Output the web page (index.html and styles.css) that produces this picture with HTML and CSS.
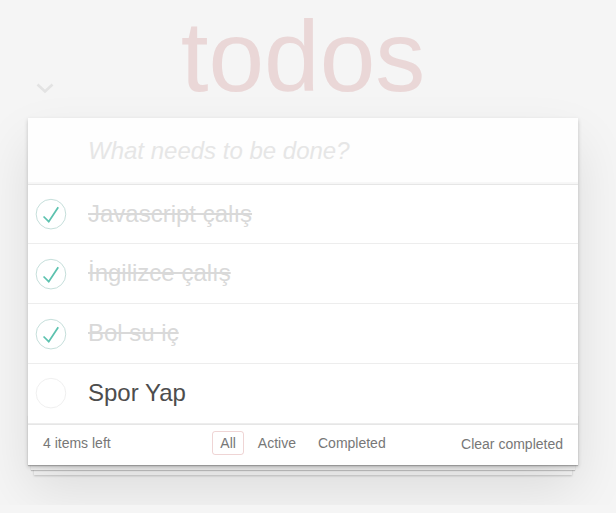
FILE: index.html
```html
<!DOCTYPE html>
<html lang="tr">
<head>
<meta charset="utf-8">
<title>todos</title>
<link rel="stylesheet" href="styles.css">
</head>
<body>
<section class="page">
  <h1 class="title">todos</h1>
  <div class="app">
    <svg class="toggle-all" width="18" height="11" viewBox="0 0 18 11"><polyline points="1.5,1.5 9,8.5 16.5,1.5" fill="none" stroke="#e3e3e3" stroke-width="2.6"/></svg>
    <div class="new-row">
      <input class="new-todo" placeholder="What needs to be done?">
    </div>
    <ul class="list">
      <li class="item completed">
        <svg class="toggle" width="40" height="40" viewBox="-10 -18 100 135"><circle cx="50" cy="50" r="50" fill="none" stroke="#bddad5" stroke-width="3"/><path fill="#5dc2af" d="M72 25L42 71 27 56l-4 4 20 20 34-52z"/></svg>
        <span class="label">Javascript çalış</span>
      </li>
      <li class="item completed">
        <svg class="toggle" width="40" height="40" viewBox="-10 -18 100 135"><circle cx="50" cy="50" r="50" fill="none" stroke="#bddad5" stroke-width="3"/><path fill="#5dc2af" d="M72 25L42 71 27 56l-4 4 20 20 34-52z"/></svg>
        <span class="label">İngilizce çalış</span>
      </li>
      <li class="item completed">
        <svg class="toggle" width="40" height="40" viewBox="-10 -18 100 135"><circle cx="50" cy="50" r="50" fill="none" stroke="#bddad5" stroke-width="3"/><path fill="#5dc2af" d="M72 25L42 71 27 56l-4 4 20 20 34-52z"/></svg>
        <span class="label">Bol su iç</span>
      </li>
      <li class="item">
        <svg class="toggle" width="40" height="40" viewBox="-10 -18 100 135"><circle cx="50" cy="50" r="50" fill="none" stroke="#ededed" stroke-width="3"/></svg>
        <span class="label">Spor Yap</span>
      </li>
    </ul>
    <footer class="footer">
      <span class="count">4 items left</span>
      <ul class="filters">
        <li><a class="filter selected" href="#/">All</a></li>
        <li><a class="filter" href="#/active">Active</a></li>
        <li><a class="filter" href="#/completed">Completed</a></li>
      </ul>
      <span class="clear">Clear completed</span>
    </footer>
  </div>
</section>
</body>
</html>
```

FILE: styles.css
```css
html, body {
  margin: 0;
  padding: 0;
}

body {
  background: #f5f5f5;
  color: #4d4d4d;
  font: 14px "Liberation Sans", Arial, sans-serif;
  line-height: 1.4em;
}

.page {
  width: 550px;
  margin: 0 0 40px 28px;
  padding-top: 6px;
}

.title {
  margin: 0 0 12px 0;
  height: 100px;
  font-size: 100px;
  line-height: 100px;
  font-weight: 100;
  text-align: center;
  color: rgba(175, 47, 47, 0.15);
}

.app {
  position: relative;
  background: #fff;
  box-shadow: 0 2px 4px 0 rgba(0, 0, 0, 0.2), 0 25px 50px 0 rgba(0, 0, 0, 0.1);
}

.toggle-all {
  position: absolute;
  left: 8px;
  top: -35px;
}

.new-row {
  display: flex;
}

.new-todo {
  flex: 1;
  margin: 0;
  padding: 16px 16px 16px 60px;
  border: none;
  outline: none;
  background: rgba(0, 0, 0, 0.003);
  box-shadow: inset 0 -2px 1px rgba(0, 0, 0, 0.03);
  font-family: inherit;
  font-size: 24px;
  line-height: 1.4em;
  height: 65.6px;
  box-sizing: border-box;
  color: #4d4d4d;
}

.new-todo::placeholder {
  font-style: italic;
  color: #e6e6e6;
}

.list {
  margin: 0;
  padding: 0;
  list-style: none;
  border-top: 1px solid #e6e6e6;
}

.item {
  display: flex;
  align-items: center;
  border-bottom: 1px solid #ededed;
  font-size: 24px;
}

.toggle {
  flex: none;
  display: block;
}

.label {
  display: block;
  padding: 15px 15px 15px 20px;
  line-height: 1.2;
}

.completed .label {
  color: #d9d9d9;
  text-decoration: line-through;
}

.footer {
  position: relative;
  display: grid;
  grid-template-columns: 1fr auto 1fr;
  grid-template-rows: 20px;
  align-items: center;
  height: 20px;
  padding: 8px 15px 12px;
  border-top: 1px solid #e6e6e6;
  color: #777;
}

.footer::before {
  content: "";
  position: absolute;
  right: 0;
  bottom: 0;
  left: 0;
  height: 50px;
  overflow: hidden;
  box-shadow: 0 1px 1px rgba(0, 0, 0, 0.2), 0 8px 0 -3px #f6f6f6, 0 9px 1px -3px rgba(0, 0, 0, 0.2), 0 16px 0 -6px #f6f6f6, 0 17px 2px -6px rgba(0, 0, 0, 0.2);
  z-index: -1;
}

.count {
  text-align: left;
  line-height: 20px;
}

.filters {
  display: flex;
  align-items: center;
  height: 20px;
  margin: 0;
  padding: 0;
  list-style: none;
}

.filter {
  display: block;
  color: inherit;
  margin: 0 3px;
  padding: 3px 7px;
  line-height: 16px;
  text-decoration: none;
  border: 1px solid transparent;
  border-radius: 3px;
}

.filter.selected {
  border-color: rgba(175, 47, 47, 0.2);
}

.clear {
  justify-self: end;
  line-height: 20px;
  position: relative;
  top: 1px;
}
```
